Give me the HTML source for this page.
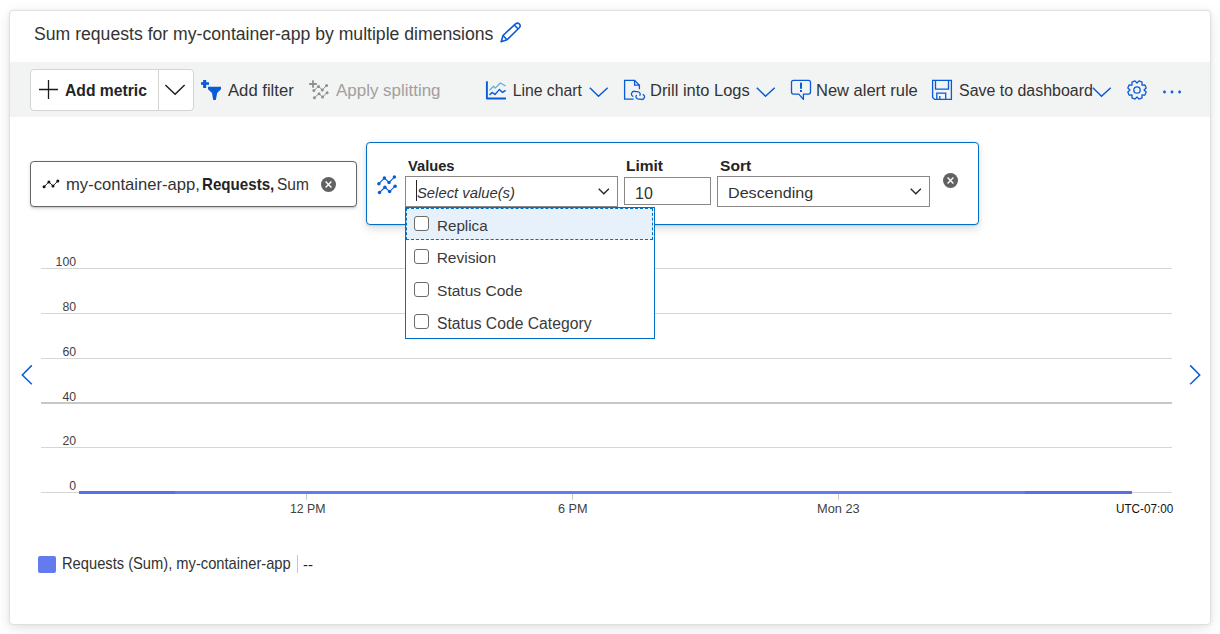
<!DOCTYPE html>
<html><head><meta charset="utf-8">
<style>
html,body{margin:0;padding:0;}
body{width:1220px;height:634px;position:relative;overflow:hidden;background:#fff;font-family:"Liberation Sans",sans-serif;color:#242424;}
.a{position:absolute;}
.t{position:absolute;line-height:1;white-space:nowrap;}
#card{left:9px;top:10px;width:1200px;height:613px;border:1px solid #e0e0e0;border-radius:4px;background:#fff;
 box-shadow:0 4px 14px rgba(0,0,0,.10),0 0 4px rgba(0,0,0,.05);}
#tb{left:10px;top:62px;width:1200px;height:55px;background:#f2f3f3;}
svg{position:absolute;overflow:visible;}
</style></head><body>
<div id="card" class="a"></div>

<!-- pencil -->
<svg style="left:500px;top:22px" width="22" height="21" viewBox="0 0 22 21"><g fill="none" stroke="#0a5bd8" stroke-width="1.6" stroke-linejoin="round"><path d="M1.2 19.8 L3 13.5 L15.5 1.8 Q17.5 0.2 19.5 2 Q21 4 19.3 5.8 L7 17.8 Z"/><path d="M14.2 3 L18.3 7"/><path d="M3 13.5 L7 17.8"/></g></svg>

<div id="tb" class="a"></div>
<!-- add metric button -->
<div class="a" style="left:30px;top:69px;width:162px;height:40px;border:1px solid #d4d4d4;border-radius:4px;background:#fff;"></div>
<div class="a" style="left:158px;top:70px;width:1px;height:40px;background:#d4d4d4;"></div>
<svg style="left:39px;top:80px" width="19" height="19"><path d="M9.5 0 V19 M0 9.5 H19" stroke="#1b1b1b" stroke-width="1.3"/></svg>

<svg style="left:164px;top:84px" width="22" height="12"><path d="M1.4 1.1 L11.1 10.3 L20.6 1.1" fill="none" stroke="#1b1b1b" stroke-width="1.4"/></svg>

<!-- add filter -->
<svg style="left:200px;top:80px" width="22" height="20" viewBox="0 0 22 20"><g fill="#0a5bd8"><rect x="1" y="2.2" width="8" height="2.6"/><rect x="3.1" y="0" width="3.1" height="8"/><path d="M8 6.8 H21 V9.2 L17.2 13.1 L15.8 20 H13.2 L12 13.1 L8 9.2 Z"/></g></svg>


<!-- apply splitting (disabled) -->
<svg style="left:305px;top:76px" width="30" height="28" viewBox="0 0 30 28"><g stroke="#8f8f8f" fill="none"><path d="M8 4.2 V11.8 M4.2 8 H11.8" stroke-width="1.8"/><path d="M8.9 14.6 L13.5 10.4 L17.3 13.9 L21.6 9.4 M9.4 21.8 L14 17.7 L17.6 21 L22.1 16.7" stroke-width="1"/></g><g fill="#8f8f8f"><circle cx="8.9" cy="14.6" r="1.5"/><circle cx="13.5" cy="10.4" r="1.5"/><circle cx="17.3" cy="13.9" r="1.5"/><circle cx="21.6" cy="9.4" r="1.5"/><circle cx="9.4" cy="21.8" r="1.5"/><circle cx="14" cy="17.7" r="1.5"/><circle cx="17.6" cy="21" r="1.5"/><circle cx="22.1" cy="16.7" r="1.5"/></g></svg>


<!-- line chart -->
<svg style="left:482px;top:76px" width="30" height="28" viewBox="0 0 30 28"><g fill="none" stroke-width="1.5" stroke-linejoin="round"><path d="M4.9 5.2 V22.5 H24" stroke="#0a5bd8" stroke-width="1.9"/><path d="M7.5 14.4 L11.5 10.2 L13.2 12.1 L18.3 7 L23.6 10" stroke="#5ab0dc" stroke-width="1.3"/><path d="M7.5 19 L10 16.4 L13 18.5 L17.5 13.4 L20.5 16.4 L23.6 14.3" stroke="#0a5bd8" stroke-width="1.4"/></g></svg>

<svg style="left:589px;top:87px" width="20" height="10"><path d="M0.8 0.8 L9.5 9.2 L18.7 0.8" fill="none" stroke="#0a5bd8" stroke-width="1.5"/></svg>

<!-- drill into logs -->
<svg style="left:620px;top:76px" width="28" height="28" viewBox="0 0 28 28"><g fill="none" stroke="#0a5bd8" stroke-width="1.3"><path d="M13.7 23.2 H4.6 V4.4 H14.6 L19.4 9.3 V13.3"/><path d="M14.6 4.4 V9.2 H19.4"/><path d="M13.3 20.6 A3 2.6 0 0 1 15.8 15.6 H17.2 A3 2.6 0 0 1 19.6 19.8"/><path d="M22.7 18.4 A3 2.6 0 0 1 20.3 23.2 H18.8 A3 2.6 0 0 1 16.6 19"/></g></svg>

<svg style="left:756px;top:87px" width="20" height="10"><path d="M0.8 0.8 L9.5 9.2 L18.7 0.8" fill="none" stroke="#0a5bd8" stroke-width="1.5"/></svg>

<!-- new alert rule -->
<svg style="left:786px;top:76px" width="28" height="28" viewBox="0 0 28 28"><path d="M7.5 4.4 H22.5 Q24.5 4.4 24.5 6.4 V16.1 Q24.5 18.1 22.5 18.1 H17.4 V23.4 L12.8 18.1 H7.5 Q5.5 18.1 5.5 16.1 V6.4 Q5.5 4.4 7.5 4.4 Z" fill="none" stroke="#0a5bd8" stroke-width="1.3" stroke-linejoin="round"/><rect x="14" y="6.6" width="2" height="6.2" fill="#0a5bd8"/><rect x="14" y="14" width="2" height="2" fill="#0a5bd8"/></svg>


<!-- save to dashboard -->
<svg style="left:928px;top:76px" width="28" height="28" viewBox="0 0 28 28"><g fill="none" stroke="#0a5bd8" stroke-width="1.3"><path d="M4.6 4.4 H23.4 V23.4 H6.6 L4.6 21.4 Z"/><path d="M7.5 4.4 V13.2 H20.5 V4.4"/><path d="M8.8 23.4 V17.2 H17.7 V23.4"/><path d="M11.8 20 V23"/></g></svg>

<svg style="left:1092px;top:87px" width="20" height="10"><path d="M0.8 0.8 L9.5 9.2 L18.7 0.8" fill="none" stroke="#0a5bd8" stroke-width="1.5"/></svg>

<!-- gear -->
<svg style="left:1126px;top:78.8px" width="22" height="22" viewBox="0 0 22 22"><g fill="none" stroke="#0a5bd8" stroke-width="1.3" stroke-linejoin="round"><path d="M11.00 4.00 L13.03 1.82 L16.05 3.07 L15.95 6.05 L18.93 5.95 L20.18 8.97 L18.00 11.00 L20.18 13.03 L18.93 16.05 L15.95 15.95 L16.05 18.93 L13.03 20.18 L11.00 18.00 L8.97 20.18 L5.95 18.93 L6.05 15.95 L3.07 16.05 L1.82 13.03 L4.00 11.00 L1.82 8.97 L3.07 5.95 L6.05 6.05 L5.95 3.07 L8.97 1.82 Z"/><circle cx="11" cy="11" r="3.2"/></g></svg>
<!-- dots -->
<svg style="left:1160px;top:88px" width="24" height="8"><g fill="#0a5bd8"><circle cx="4.5" cy="4" r="1.4"/><circle cx="12" cy="4" r="1.4"/><circle cx="19.6" cy="4" r="1.4"/></g></svg>

<!-- metric pill -->
<div class="a" style="left:30px;top:161px;width:325px;height:44px;border:1px solid #666;border-radius:4px;background:#fff;box-shadow:0 1.6px 3.6px rgba(0,0,0,.13),0 .3px .9px rgba(0,0,0,.11);"></div>
<svg style="left:38px;top:172px" width="26" height="24" viewBox="0 0 26 24"><path d="M6.1 14.8 L10.9 9.9 L15 14 L19.8 9" fill="none" stroke="#242424" stroke-width="1"/><g fill="#111"><circle cx="6.1" cy="14.8" r="1.5"/><circle cx="10.9" cy="9.9" r="1.5"/><circle cx="15" cy="14" r="1.5"/><circle cx="19.8" cy="9" r="1.5"/></g></svg>

<svg style="left:321px;top:177px" width="15" height="15" viewBox="0 0 15 15"><circle cx="7.5" cy="7.5" r="7.5" fill="#616161"/><path d="M4.6 4.6 L10.4 10.4 M10.4 4.6 L4.6 10.4" stroke="#fff" stroke-width="1.4"/></svg>

<!-- splitting panel -->
<div class="a" style="left:366px;top:142px;width:611px;height:81px;border:1px solid #0070c6;border-radius:4px;background:#fff;box-shadow:0 3.2px 8px rgba(0,0,0,.13),0 .6px 1.8px rgba(0,0,0,.11);"></div>
<svg style="left:372px;top:170px" width="30" height="30" viewBox="0 0 30 30"><path d="M6.9 13.7 L12.4 8.1 L17 12.5 L22.4 7.1 M7.5 22.5 L12.9 17.3 L17.6 21.6 L23.1 16.2" fill="none" stroke="#0a5bd8" stroke-width="1.1"/><g fill="#0a5bd8"><circle cx="6.9" cy="13.7" r="1.75"/><circle cx="12.4" cy="8.1" r="1.75"/><circle cx="17" cy="12.5" r="1.75"/><circle cx="22.4" cy="7.1" r="1.75"/><circle cx="7.5" cy="22.5" r="1.75"/><circle cx="12.9" cy="17.3" r="1.75"/><circle cx="17.6" cy="21.6" r="1.75"/><circle cx="23.1" cy="16.2" r="1.75"/></g></svg>




<div class="a" style="left:405px;top:176px;height:31px;border:1px solid #8a8886;background:#fff;box-sizing:border-box;width:213px;"></div>
<div class="a" style="left:416px;top:180px;width:1px;height:21px;background:#242424;"></div>

<svg style="left:598px;top:188px" width="12" height="7"><path d="M0.7 0.7 L5.8 5.8 L10.9 0.7" fill="none" stroke="#242424" stroke-width="1.3"/></svg>

<div class="a" style="left:624px;top:177px;width:87px;height:28px;border:1px solid #8a8886;box-sizing:border-box;background:#fff;"></div>


<div class="a" style="left:717px;top:176px;width:213px;height:31px;border:1px solid #8a8886;box-sizing:border-box;background:#fff;"></div>

<svg style="left:910px;top:188px" width="12" height="8"><path d="M0.7 0.7 L5.8 5.8 L10.9 0.7" fill="none" stroke="#242424" stroke-width="1.3"/></svg>
<svg style="left:943px;top:173px" width="15" height="15" viewBox="0 0 15 15"><circle cx="7.5" cy="7.5" r="7.5" fill="#616161"/><path d="M4.6 4.6 L10.4 10.4 M10.4 4.6 L4.6 10.4" stroke="#fff" stroke-width="1.4"/></svg>

<!-- chart grid -->
<div class="a" style="left:41px;top:268px;width:1131px;height:1px;background:#d6d6d6;"></div>
<div class="a" style="left:41px;top:313px;width:1131px;height:1px;background:#d6d6d6;"></div>
<div class="a" style="left:41px;top:358px;width:1131px;height:1px;background:#d6d6d6;"></div>
<div class="a" style="left:41px;top:402px;width:1131px;height:2px;background:#c8c8c8;"></div>
<div class="a" style="left:41px;top:447px;width:1131px;height:1px;background:#d6d6d6;"></div>
<div class="a" style="left:41px;top:492px;width:1131px;height:1px;background:#d6d6d6;"></div>







<div class="a" style="left:306px;top:494px;width:1px;height:6px;background:#c8c8c8;"></div>
<div class="a" style="left:572px;top:494px;width:1px;height:6px;background:#c8c8c8;"></div>
<div class="a" style="left:838px;top:494px;width:1px;height:6px;background:#c8c8c8;"></div>
<div class="a" style="left:79px;top:491px;width:1053px;height:3px;background:#667cee;"></div>
<div class="a" style="left:79px;top:491px;width:96px;height:3px;background:#5570ea;"></div>
<div class="a" style="left:1025px;top:491px;width:107px;height:3px;background:#5570ea;"></div>





<!-- nav arrows -->
<svg style="left:21px;top:364px" width="12" height="22"><path d="M10.8 1.4 L1.3 11 L10.8 20.3" fill="none" stroke="#0a5bd8" stroke-width="1.5"/></svg>
<svg style="left:1189px;top:364px" width="12" height="22"><path d="M1.2 1.4 L10.7 11 L1.2 20.3" fill="none" stroke="#0a5bd8" stroke-width="1.5"/></svg>

<!-- legend -->
<div class="a" style="left:38px;top:556px;width:18px;height:17px;border-radius:2px;background:#647aef;"></div>

<div class="a" style="left:297px;top:555px;width:1px;height:18px;background:#c8c8c8;"></div>


<!-- dropdown -->
<div class="a" style="left:405px;top:207px;width:250px;height:132px;border:1px solid #0070c6;box-sizing:border-box;background:#fff;"></div>
<div class="a" style="left:406px;top:208px;width:247px;height:32px;border:1px dashed #0070c6;box-sizing:border-box;background:#e6f1fb;"></div>
<div class="a" style="left:414px;top:216px;width:15px;height:15px;border:1px solid #6b6b6b;border-radius:3px;box-sizing:border-box;background:#fff;"></div>
<div class="a" style="left:414px;top:249px;width:15px;height:15px;border:1px solid #6b6b6b;border-radius:3px;box-sizing:border-box;background:#fff;"></div>
<div class="a" style="left:414px;top:281.5px;width:15px;height:15px;border:1px solid #6b6b6b;border-radius:3px;box-sizing:border-box;background:#fff;"></div>
<div class="a" style="left:414px;top:313.7px;width:15px;height:15px;border:1px solid #6b6b6b;border-radius:3px;box-sizing:border-box;background:#fff;"></div>




<div class="t" style="left:33.74px;top:24.55px;font-size:18.30px;font-weight:normal;font-style:normal;color:#333333;transform:scaleX(0.9641);transform-origin:0 0;">Sum requests for my-container-app by multiple dimensions</div>
<div class="t" style="left:65.22px;top:81.70px;font-size:16.44px;font-weight:bold;font-style:normal;color:#242424;transform:scaleX(0.9546);transform-origin:0 0;">Add metric</div>
<div class="t" style="left:228.30px;top:82.70px;font-size:15.93px;font-weight:normal;font-style:normal;color:#333333;transform:scaleX(1.0464);transform-origin:0 0;">Add filter</div>
<div class="t" style="left:335.60px;top:82.70px;font-size:15.93px;font-weight:normal;font-style:normal;color:#a19f9d;transform:scaleX(1.0639);transform-origin:0 0;">Apply splitting</div>
<div class="t" style="left:512.65px;top:82.70px;font-size:15.79px;font-weight:normal;font-style:normal;color:#333333;">Line chart</div>
<div class="t" style="left:650.00px;top:82.70px;font-size:15.79px;font-weight:normal;font-style:normal;color:#333333;transform:scaleX(1.0432);transform-origin:0 0;">Drill into Logs</div>
<div class="t" style="left:815.99px;top:82.70px;font-size:15.79px;font-weight:normal;font-style:normal;color:#333333;transform:scaleX(1.0457);transform-origin:0 0;">New alert rule</div>
<div class="t" style="left:958.73px;top:82.70px;font-size:15.60px;font-weight:normal;font-style:normal;color:#333333;transform:scaleX(1.0225);transform-origin:0 0;">Save to dashboard</div>
<div class="t" style="left:66.07px;top:176.00px;font-size:16.19px;font-weight:normal;font-style:normal;color:#333333;transform:scaleX(1.0254);transform-origin:0 0;">my-container-app,</div>
<div class="t" style="left:202.13px;top:176.70px;font-size:15.65px;font-weight:bold;font-style:normal;color:#242424;transform:scaleX(0.9669);transform-origin:0 0;">Requests,</div>
<div class="t" style="left:277.17px;top:176.65px;font-size:16.01px;font-weight:normal;font-style:normal;color:#333333;transform:scaleX(0.9677);transform-origin:0 0;">Sum</div>
<div class="t" style="left:408.36px;top:157.60px;font-size:15.51px;font-weight:bold;font-style:normal;color:#242424;transform:scaleX(0.9472);transform-origin:0 0;">Values</div>
<div class="t" style="left:626.00px;top:157.60px;font-size:15.51px;font-weight:bold;font-style:normal;color:#242424;">Limit</div>
<div class="t" style="left:719.90px;top:157.60px;font-size:15.50px;font-weight:bold;font-style:normal;color:#242424;transform:scaleX(1.0050);transform-origin:0 0;">Sort</div>
<div class="t" style="left:417.08px;top:185.50px;font-size:14.22px;font-weight:normal;font-style:italic;color:#333333;transform:scaleX(1.0411);transform-origin:0 0;">Select value(s)</div>
<div class="t" style="left:634.82px;top:185.70px;font-size:15.59px;font-weight:normal;font-style:normal;color:#333333;transform:scaleX(1.0258);transform-origin:0 0;">10</div>
<div class="t" style="left:727.60px;top:184.70px;font-size:15.51px;font-weight:normal;font-style:normal;color:#333333;transform:scaleX(1.0403);transform-origin:0 0;">Descending</div>
<div class="t" style="left:436.67px;top:217.70px;font-size:15.51px;font-weight:normal;font-style:normal;color:#3a3a3a;transform:scaleX(0.9802);transform-origin:0 0;">Replica</div>
<div class="t" style="left:436.65px;top:250.30px;font-size:15.51px;font-weight:normal;font-style:normal;color:#3a3a3a;">Revision</div>
<div class="t" style="left:437.15px;top:282.90px;font-size:15.50px;font-weight:normal;font-style:normal;color:#3a3a3a;transform:scaleX(1.0042);transform-origin:0 0;">Status Code</div>
<div class="t" style="left:437.24px;top:315.80px;font-size:15.57px;font-weight:normal;font-style:normal;color:#3a3a3a;transform:scaleX(1.0089);transform-origin:0 0;">Status Code Category</div>
<div class="t" style="left:289.85px;top:502.70px;font-size:12.95px;font-weight:normal;font-style:normal;color:#424242;transform:scaleX(0.9504);transform-origin:0 0;">12 PM</div>
<div class="t" style="left:558.34px;top:502.70px;font-size:12.59px;font-weight:normal;font-style:normal;color:#424242;transform:scaleX(1.0073);transform-origin:0 0;">6 PM</div>
<div class="t" style="left:816.81px;top:502.70px;font-size:12.95px;font-weight:normal;font-style:normal;color:#424242;transform:scaleX(0.9904);transform-origin:0 0;">Mon 23</div>
<div class="t" style="left:1115.99px;top:503.10px;font-size:12.94px;font-weight:normal;font-style:normal;color:#111111;transform:scaleX(0.9053);transform-origin:0 0;">UTC-07:00</div>
<div class="t" style="left:62.16px;top:554.90px;font-size:16.10px;font-weight:normal;font-style:normal;color:#333333;transform:scaleX(0.9132);transform-origin:0 0;">Requests (Sum), my-container-app</div>
<div class="t" style="right:1143.9px;top:255.70px;font-size:12.29px;color:#424242;">100</div>
<div class="t" style="right:1143.9px;top:300.70px;font-size:12.29px;color:#424242;">80</div>
<div class="t" style="right:1143.9px;top:346.10px;font-size:12.29px;color:#424242;">60</div>
<div class="t" style="right:1143.9px;top:391.00px;font-size:12.29px;color:#424242;">40</div>
<div class="t" style="right:1143.9px;top:435.40px;font-size:12.29px;color:#424242;">20</div>
<div class="t" style="right:1143.9px;top:479.90px;font-size:12.29px;color:#424242;">0</div>
<div class="t" style="left:303px;top:556.7px;font-size:15px;color:#242424;">--</div>
</body></html>
